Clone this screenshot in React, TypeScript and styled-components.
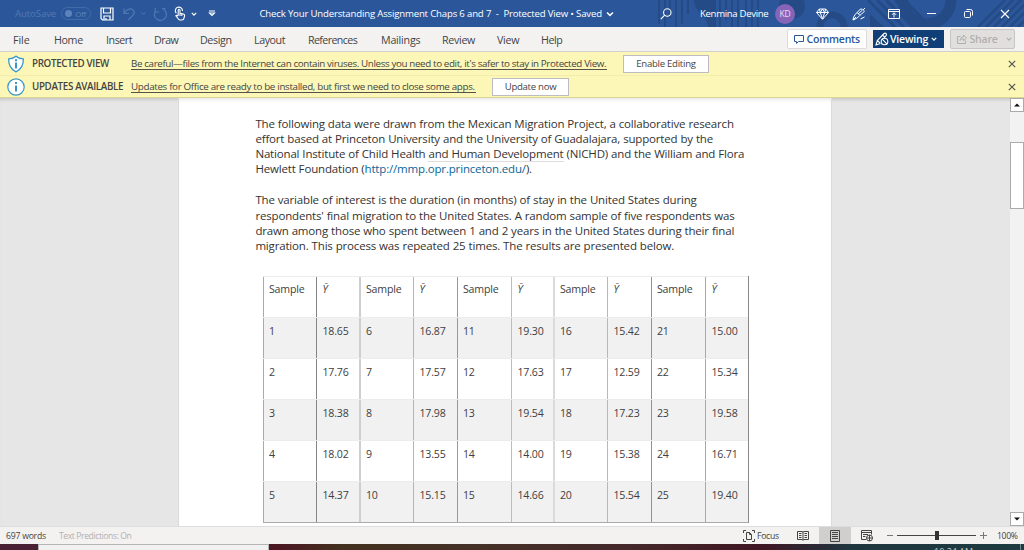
import React from 'react';
import styled, { createGlobalStyle } from 'styled-components';

const Global = createGlobalStyle`
  * { box-sizing: border-box; }
  html, body { margin: 0; padding: 0; overflow: hidden; }
  body { font-family: "Open Sans", "Noto Sans", sans-serif; color: #444; }
  svg { display: block; flex: none; }
`;

const Window = styled.div`
  width: 1024px;
  height: 550px;
  display: flex;
  flex-direction: column;
  overflow: hidden;
  background: #e6e6e6;
`;

/* Title bar */
const TitleBar = styled.header`
  position: relative;
  flex: none;
  height: 27px;
  background: #2b579a;
  color: #fff;
  overflow: hidden;
`;
const TitlePattern = styled.svg`
  position: absolute;
  right: 0;
  top: 0;
`;
const TitleRow = styled.div`
  position: relative;
  display: flex;
  align-items: center;
  height: 27px;
`;
const TitleText = styled.span<{ $w: number; $ml?: number; $ls?: number; $dim?: boolean }>`
  flex: none;
  width: ${p => p.$w}px;
  margin-left: ${p => p.$ml ?? 0}px;
  font-size: 9.6px;
  line-height: 14px;
  padding-top: 1px;
  letter-spacing: ${p => p.$ls ?? 0}px;
  white-space: pre;
  color: ${p => (p.$dim ? '#5079b3' : '#fff')};
`;
const Toggle = styled.span`
  flex: none;
  display: flex;
  align-items: center;
  justify-content: space-between;
  width: 30px;
  height: 13px;
  margin-left: 4px;
  padding: 0 4px 0 3px;
  border: 1px solid #426ca9;
  border-radius: 7px;
  font-size: 8px;
  letter-spacing: -0.3px;
  color: #5c83bb;
`;
const ToggleKnob = styled.i`
  width: 7px;
  height: 7px;
  border-radius: 50%;
  background: #5c83bb;
`;
const Glyph = styled.span<{ $w: number; $ml?: number }>`
  flex: none;
  display: flex;
  justify-content: center;
  width: ${p => p.$w}px;
  margin-left: ${p => p.$ml ?? 0}px;
`;
const Avatar = styled.span`
  flex: none;
  display: flex;
  align-items: center;
  justify-content: center;
  width: 20px;
  height: 20px;
  margin-left: 7px;
  border-radius: 50%;
  background: #8764b8;
  font-size: 8.5px;
  letter-spacing: -0.2px;
  color: #eadff5;
`;

/* Ribbon tabs */
const Ribbon = styled.nav`
  flex: none;
  display: flex;
  align-items: center;
  height: 25px;
  background: #f3f2f1;
  border-bottom: 1px solid #d2d0ce;
`;
const Tab = styled.span<{ $w: number; $ls: number }>`
  flex: none;
  width: ${p => p.$w}px;
  font-size: 10.7px;
  letter-spacing: ${p => p.$ls - 0.08}px;
  white-space: nowrap;
  padding-top: 1px;
`;
const Tabs = styled.div`
  display: flex;
  flex: 1;
  padding-left: 13px;
`;
const RibbonButton = styled.button<{ $w: number; $kind: 'plain' | 'active' | 'off' }>`
  flex: none;
  display: flex;
  align-items: center;
  gap: ${p => (p.$kind === 'active' ? 1 : 3)}px;
  width: ${p => p.$w}px;
  height: ${p => (p.$kind === 'active' ? 18 : 20)}px;
  margin-left: ${p => (p.$kind === 'plain' ? 0 : 6)}px;
  margin-right: ${p => (p.$kind === 'off' ? 9 : 0)}px;
  padding: 0 0 0 ${p => (p.$kind === 'active' ? 1 : 5.5)}px;
  border: 1px solid ${p => ({ plain: '#dddbd9', active: '#103f77', off: '#c8c6c4' })[p.$kind]};
  border-radius: ${p => (p.$kind === 'active' ? 0 : 2)}px;
  background: ${p => ({ plain: '#fff', active: '#103f77', off: '#e1dfdd' })[p.$kind]};
  color: ${p => ({ plain: '#2b579a', active: '#fff', off: '#b1afad' })[p.$kind]};
  font: 600 10.5px "Open Sans", sans-serif;
  letter-spacing: -0.2px;
`;

/* Message bars */
const Messages = styled.section`
  flex: none;
  height: 46px;
  background: #fcf7b6;
  border-bottom: 1px solid #d9d49a;
`;
const Message = styled.div`
  display: flex;
  align-items: center;
  height: 23px;
  padding: 0 7px;
  & + & { border-top: 1px solid #f2ecaf; height: 22px; }
`;
const MessageTitle = styled.strong`
  flex: none;
  width: 99px;
  margin-left: 7px;
  font-size: 9.8px;
  font-weight: 600;
  letter-spacing: -0.34px;
  white-space: nowrap;
`;
const MessageLink = styled.span<{ $w: number; $ls: number }>`
  flex: none;
  width: ${p => p.$w}px;
  height: 12px;
  line-height: 11px;
  border-bottom: 1px solid #55534a;
  font-size: 9.8px;
  letter-spacing: ${p => p.$ls}px;
  white-space: nowrap;
`;
const MessageButton = styled.button<{ $w: number; $ml: number }>`
  flex: none;
  width: ${p => p.$w}px;
  height: 18px;
  margin-left: ${p => p.$ml}px;
  padding: 0;
  border: 1px solid #bdbcc0;
  background: #fff;
  color: #444;
  font: 9.6px "Open Sans", sans-serif;
  letter-spacing: -0.28px;
`;
const Dismiss = styled.span`
  margin-left: auto;
  padding-right: 1px;
`;

/* Document area */
const Workspace = styled.main`
  flex: 1;
  min-height: 0;
  display: flex;
  background: #e6e6e6;
  box-shadow: inset 0 4px 4px -3px rgba(0, 0, 0, 0.18);
`;
const Page = styled.article`
  width: 654px;
  height: 100%;
  margin-left: 178px;
  padding: 17.5px 0 0 76.4px;
  background: #fff;
  border: solid #dadada;
  border-width: 0 1px;
  box-shadow: inset 0 4px 4px -3px rgba(0, 0, 0, 0.13);
`;
const Paragraph = styled.p`
  margin: 0 0 16px;
  font-size: 11.5px;
  line-height: 15.2px;
  letter-spacing: -0.17px;
  word-spacing: 0.2px;
  color: #333;
`;
const Line = styled.span`
  display: block;
  white-space: nowrap;
`;
const Hyperlink = styled.a`color: #0b6597;`;
const Suggested = styled.span`box-shadow: 0 1px 0 #dedede;`;
const Table = styled.div`
  width: 486px;
  margin: 22.9px 0 0 7.6px;
  border-right: 1px solid #888;
  border-bottom: 1px solid #aaa;
`;
const TableRow = styled.div<{ $shade: boolean }>`
  display: grid;
  grid-template-columns: 53px 43px 54px 44px 54px 42px 54px 44px 54px 43px;
  height: 41px;
  background: ${p => (p.$shade ? '#f1f1f1' : '#fff')};
  border-top: 1px solid #ececec;
`;
const Cell = styled.div<{ $line: string; $thick: boolean; $value: boolean; $symbol: boolean; $head: boolean }>`
  border-left: ${p => (p.$thick ? 2 : 1)}px solid ${p => p.$line};
  padding: ${p => (p.$head ? 5 : 6)}px 0 0 ${p => (p.$value && !p.$thick ? 5.5 : 5)}px;
  font-size: ${p => (p.$symbol ? 10.4 : 10.6)}px;
  line-height: 15.500px;
  letter-spacing: -0.17px;
  font-style: ${p => (p.$symbol ? 'italic' : 'normal')};
  color: #404040;
  white-space: nowrap;
`;

/* Vertical scrollbar */
const Scrollbar = styled.aside`
  display: flex;
  flex-direction: column;
  width: 14px;
  height: 100%;
  margin-left: auto;
  background: #f2f2f2;
`;
const ScrollArrow = styled.div`
  display: flex;
  align-items: center;
  justify-content: center;
  height: 14px;
  border: 1px solid #aaa;
  background: #fff;
`;
const ScrollThumb = styled.div`
  height: 67px;
  margin: 30px 0 auto;
  border: 1px solid #ababab;
  background: #fff;
`;

/* Status bar */
const StatusBar = styled.footer`
  flex: none;
  display: flex;
  align-items: center;
  height: 18px;
  background: #f3f2f1;
  border-top: 1px solid #dedddc;
`;
const StatusText = styled.span<{ $ml: number; $w: number; $dim?: boolean; $ls: number }>`
  flex: none;
  width: ${p => p.$w}px;
  margin-left: ${p => p.$ml}px;
  font-size: 8.7px;
  line-height: 16px;
  letter-spacing: ${p => p.$ls}px;
  color: ${p => (p.$dim ? '#b3b1af' : '#444')};
  white-space: nowrap;
`;
const ViewButton = styled.span<{ $on?: boolean }>`
  flex: none;
  display: flex;
  align-items: center;
  justify-content: center;
  width: 32px;
  height: 17px;
  background: ${p => (p.$on ? '#d0cfce' : 'transparent')};
`;

/* Sliver of the desktop under the window */
const Desktop = styled.div`
  flex: none;
  display: flex;
  height: 6px;
  overflow: hidden;
  background: linear-gradient(90deg, #4a2034 0, #4a2034 38px, #4b1822 280px, #43301f 340px, #453128 480px, #44272a 640px, #3f1622 760px, #2a2834 815px, #20363e 850px, #1d3b41 1024px);
`;
const SearchBox = styled.div`
  width: 231px;
  height: 8px;
  margin-left: 38px;
  border: 1px solid #b5b5b5;
  background: #f1f1f1;
`;
const Clock = styled.span`
  margin: 3px 0 0 665px;
  font-size: 9px;
  line-height: 10px;
  white-space: nowrap;
  color: #c5ced0;
`;
const DesktopEdge = styled.i`
  margin-left: auto;
  margin-right: 3px;
  width: 1px;
  background: #75878b;
`;

const Chevron = ({ color = '#fff', size = 6 }: { color?: string; size?: number }) => (
  <svg width={size} height={size} viewBox="0 0 6 6" fill="none" stroke={color} strokeWidth="1.2"><path d="M.8 1.9 3 4.1 5.2 1.9" /></svg>
);
const Close = ({ s, color, w = 1 }: { s: number; color: string; w?: number }) => (
  <svg width={s} height={s} viewBox="0 0 10 10" stroke={color} strokeWidth={w}><path d="M1 1 9 9M9 1 1 9" /></svg>
);

const symbol = 'Ȳ';
const lines: [string, boolean][] = [
  ['#aaa', false], ['#858585', false], ['#cecece', true], ['#b5b5b5', false], ['#9a9a9a', false],
  ['#bcbcbc', false], ['#dadada', true], ['#b8b8b8', false], ['#929292', false], ['#a8a8a8', false],
];
const rows: string[][] = [
  ['Sample', symbol, 'Sample', symbol, 'Sample', symbol, 'Sample', symbol, 'Sample', symbol],
  ['1', '18.65', '6', '16.87', '11', '19.30', '16', '15.42', '21', '15.00'],
  ['2', '17.76', '7', '17.57', '12', '17.63', '17', '12.59', '22', '15.34'],
  ['3', '18.38', '8', '17.98', '13', '19.54', '18', '17.23', '23', '19.58'],
  ['4', '18.02', '9', '13.55', '14', '14.00', '19', '15.38', '24', '16.71'],
  ['5', '14.37', '10', '15.15', '15', '14.66', '20', '15.54', '25', '19.40'],
];
const tabs: [string, number, number][] = [
  ['File', 41, 0], ['Home', 52, -0.27], ['Insert', 48, -0.37], ['Draw', 46, -0.4], ['Design', 54, -0.3], ['Layout', 54, -0.35],
  ['References', 73, -0.54], ['Mailings', 61, -0.14], ['Review', 55, -0.23], ['View', 44, -0.22], ['Help', 30, -0.35],
];

const Pattern = () => (
  <TitlePattern width="370" height="27" viewBox="654 0 370 27" fill="none" stroke="#254b86">
    <path d="M659 0v24M665 0v27M670 0v18M676 0v27M682 0v24M688 0v14" strokeWidth="2" />
    <path d="M694 0h22v27h-8c0-12-14-14-14-27z" fill="#254b86" stroke="none" />
    <path d="M720 0v27M726 0v20M732 0v27M738 0v27M746 0v27M752 0v27M758 0v27" strokeWidth="2" />
    <circle cx="792" cy="6" r="13" fill="#254b86" stroke="none" />
    <circle cx="832" cy="27" r="12" strokeWidth="7" />
    <path d="M868 0 895 27M877 0 904 27M886 0 913 27M895 0 922 27M904 0 931 27" strokeWidth="3" />
    <path d="M870 14v13h14z" fill="#254b86" stroke="none" />
    <circle cx="927" cy="0" r="24" strokeWidth="11" />
    <path d="M978 27 1005 0M986 27 1013 0M994 27 1021 0M1002 27 1024 5M1010 27 1024 13M1018 27 1024 21" strokeWidth="2.5" />
  </TitlePattern>
);

export default function App() {
  return (
    <Window>
      <Global />
      <TitleBar>
        <Pattern />
        <TitleRow>
          <TitleText $w={42} $ml={15} $ls={-0.1} $dim>AutoSave</TitleText>
          <Toggle><ToggleKnob />Off</Toggle>
          <Glyph $w={14} $ml={9}>
            <svg width="14" height="14" viewBox="0 0 14 14" fill="none" stroke="#fff" strokeWidth="1.2"><path d="M1 1h12v12H2.5L1 11.5zM3.5 1v5h7V1M4 13V9h6v4M6 11v2" /></svg>
          </Glyph>
          <Glyph $w={12} $ml={9}>
            <svg width="13" height="14" viewBox="0 0 13 14" fill="none" stroke="#5079b3" strokeWidth="1.2"><path d="M1 1.5v5h5M1.2 6.2C4 1.5 8 1 10.300 3.200c3 3-1 5.500-5 9.600" /></svg>
          </Glyph>
          <Glyph $w={6} $ml={5}><Chevron color="#5079b3" size={5} /></Glyph>
          <Glyph $w={14} $ml={7}>
            <svg width="14" height="14" viewBox="0 0 14 14" fill="none" stroke="#5079b3" strokeWidth="1.2"><path d="M2.200 1v4h4M10.500 2.300A6 6 0 1 1 2.300 4.300M9 1.500h3.500" /></svg>
          </Glyph>
          <Glyph $w={12} $ml={7}>
            <svg width="12" height="15" viewBox="0 0 12 15" fill="none" stroke="#fff" strokeWidth="1.1"><path d="M2.300 7.200A3.600 3.600 0 1 1 8.500 5M4.200 9.500V4.200c0-1.300 1.800-1.300 1.800 0v3l3.400.8c1 .3 1.300.8 1.200 1.700L10 12.200c-.3 1.200-1 1.800-2 1.800H6.200c-.8 0-1.300-.3-1.800-1L1.800 9.800c.6-.8 1.500-.5 2.400.4M7.800 8v2M6 7v3" /></svg>
          </Glyph>
          <Glyph $w={6} $ml={5}><Chevron size={6} /></Glyph>
          <Glyph $w={10} $ml={10}>
            <svg width="8" height="7" viewBox="0 0 8 7" fill="none" stroke="#fff" strokeWidth="1.1"><path d="M1 1h6M1.500 3 4 5.500 6.500 3z" /></svg>
          </Glyph>
          <TitleText $ml={42.500} $w={344.500} $ls={-0.17}>Check Your Understanding Assignment Chaps 6 and 7  -  Protected View • Saved</TitleText>
          <Glyph $w={7} $ml={2}><Chevron size={8} /></Glyph>
          <Glyph $w={12} $ml={47}>
            <svg width="12" height="12" viewBox="0 0 12 12" fill="none" stroke="#fff" strokeWidth="1.1"><circle cx="7.300" cy="4.500" r="3.700" /><path d="M4.700 7.200 .8 11.200" /></svg>
          </Glyph>
          <TitleText $ml={28} $w={68} $ls={-0.33}>Kenmina Devine</TitleText>
          <Avatar>KD</Avatar>
          <Glyph $w={13} $ml={21}>
            <svg width="13" height="12" viewBox="0 0 13 12" fill="none" stroke="#fff" strokeWidth="1"><path d="M3.300 1h6.400l2.800 3.500L6.500 11.300.5 4.500zM.5 4.500h12M4.300 4.500l2.200 6.500 2.200-6.500L6.500 1zM3.300 1l1 3.500M9.700 1l-1 3.500" /></svg>
          </Glyph>
          <Glyph $w={14} $ml={23}>
            <svg width="14" height="14" viewBox="0 0 14 14" fill="none" stroke="#fff" strokeWidth="1"><path d="M1 13c.3-3 1.500-5 4-7.500l3 2.800C6 10.500 4 12 1 13zM5 5.500 8.500 2l2 .2M8 8.300l4.500-4-1-1M6 7l4.500-4M11 3l2-2M1 13l3-3M8.500 12l4-2" /></svg>
          </Glyph>
          <Glyph $w={12} $ml={22}>
            <svg width="12" height="10" viewBox="0 0 12 10" fill="none" stroke="#fff" strokeWidth="1"><path d="M.5.5h11v9H.5zM.5 2.500h11M6 8.500V4M4 5.800l2-2 2 2" /></svg>
          </Glyph>
          <Glyph $w={9} $ml={27}>
            <svg width="9" height="3" viewBox="0 0 9 3" stroke="#fff"><path d="M0 1.500h9" /></svg>
          </Glyph>
          <Glyph $w={9} $ml={28}>
            <svg width="9" height="9" viewBox="0 0 9 9" fill="none" stroke="#fff"><rect x=".5" y="2.500" width="6" height="6" rx="1" /><path d="M2.500.5h4a2 2 0 0 1 2 2v4" /></svg>
          </Glyph>
          <Glyph $w={10} $ml={27}><Close s={10} color="#fff" w={1.1} /></Glyph>
        </TitleRow>
      </TitleBar>

      <Ribbon>
        <Tabs>{tabs.map(([t, w, ls]) => <Tab key={t} $w={w} $ls={ls}>{t}</Tab>)}</Tabs>
        <RibbonButton $w={80} $kind="plain">
          <svg width="10" height="9" viewBox="0 0 10 9" fill="none" stroke="#2b579a"><path d="M.5.5h9v6H4.500l-2 2v-2h-2z" /></svg>
          Comments
        </RibbonButton>
        <RibbonButton $w={71} $kind="active">
          <svg width="14" height="14" viewBox="0 0 14 14" fill="none" stroke="#fff" strokeWidth="1.1"><path d="M5.500 11.500 1 13l1.300-4.500L9 1.500c1.500-1 3 .3 2.300 1.900L9 6M2.300 8.500 5 11M7.500 3l2 2" /><circle cx="9.500" cy="9.500" r="3.300" /><path d="m7.200 7.200 4.600 4.600" /></svg>
          Viewing <Glyph $w={6} $ml={2}><Chevron size={6} /></Glyph>
        </RibbonButton>
        <RibbonButton $w={65} $kind="off">
          <svg width="10" height="10" viewBox="0 0 10 10" fill="none" stroke="#b1afad"><path d="M3.500 2.500h-3v7h8v-3M3 6.500c0-2.500 1.500-3.500 3.500-3.500V1L9.500 4l-3 2.700V5C5 5 4 5.300 3 6.500z" /></svg>
          Share <Glyph $w={6} $ml={5}><Chevron color="#b1afad" size={6} /></Glyph>
        </RibbonButton>
      </Ribbon>

      <Messages>
        <Message>
          <svg width="18" height="18" viewBox="0 0 18 18" fill="#fff" stroke="#3a96c8" strokeWidth="1.3"><path d="M9 1.200C11 3 13.500 3.800 16.300 3.800c.3 6-1.300 10.200-7.300 13C3 14 1.400 9.800 1.700 3.800 4.500 3.800 7 3 9 1.200z" /><path d="M9 7.500v6M9 4.300v2" strokeWidth="2" /></svg>
          <MessageTitle>PROTECTED VIEW</MessageTitle>
          <MessageLink $w={476} $ls={-0.37}>Be careful—files from the Internet can contain viruses. Unless you need to edit, it's safer to stay in Protected View.</MessageLink>
          <MessageButton $w={86} $ml={16}>Enable Editing</MessageButton>
          <Dismiss><Close s={8} color="#555" w={1.5} /></Dismiss>
        </Message>
        <Message>
          <svg width="18" height="18" viewBox="0 0 18 18" fill="#fff" stroke="#3a96c8" strokeWidth="1.2"><circle cx="9" cy="9" r="8.200" /><path d="M9 7.500v6M9 4v2" strokeWidth="2" /></svg>
          <MessageTitle>UPDATES AVAILABLE</MessageTitle>
          <MessageLink $w={345} $ls={-0.33}>Updates for Office are ready to be installed, but first we need to close some apps.</MessageLink>
          <MessageButton $w={77} $ml={16}>Update now</MessageButton>
          <Dismiss><Close s={8} color="#555" w={1.5} /></Dismiss>
        </Message>
      </Messages>

      <Workspace>
        <Page>
          <Paragraph>
            <Line>The following data were drawn from the Mexican Migration Project, a collaborative research</Line>
            <Line>effort based at Princeton University and the University of Guadalajara, supported by the</Line>
            <Line>National Institute of Child Health <Suggested>and Human Development</Suggested> (NICHD) and the William and Flora</Line>
            <Line>Hewlett Foundation (<Hyperlink>http://mmp.opr.princeton.edu/</Hyperlink>).</Line>
          </Paragraph>
          <Paragraph>
            <Line>The variable of interest is the duration (in months) of stay in the United States during</Line>
            <Line>respondents' final migration to the United States. A random sample of five respondents was</Line>
            <Line>drawn among those who spent between 1 and 2 years in the United States during their final</Line>
            <Line>migration. This process was repeated 25 times. The results are presented below.</Line>
          </Paragraph>
          <Table>
            {rows.map((r, i) => (
              <TableRow key={i} $shade={i % 2 === 1}>
                {r.map((c, j) => <Cell key={j} $line={lines[j][0]} $thick={lines[j][1]} $value={j % 2 === 1} $symbol={c === symbol} $head={i === 0}>{c}</Cell>)}
              </TableRow>
            ))}
          </Table>
        </Page>
        <Scrollbar>
          <ScrollArrow><svg width="6" height="4" viewBox="0 0 6 4"><path d="M0 3.500 3 .5 6 3.500z" fill="#111" /></svg></ScrollArrow>
          <ScrollThumb />
          <ScrollArrow><svg width="6" height="4" viewBox="0 0 6 4"><path d="M0 .5 3 3.500 6 .5z" fill="#111" /></svg></ScrollArrow>
        </Scrollbar>
      </Workspace>

      <StatusBar>
        <StatusText $ml={6} $w={40} $ls={-0.25}>697 words</StatusText>
        <StatusText $ml={13} $w={73} $ls={-0.45} $dim>Text Predictions: On</StatusText>
        <Glyph $w={12} $ml={611}>
          <svg width="12" height="12" viewBox="0 0 12 12" fill="none" stroke="#444"><path d="M3 .5H.5V3M9 .5h2.500V3M3 11.500H.5V9M9 11.500h2.500V9M3.500 2.500h3L8.500 4.500v5h-5zM6.500 2.500v2h2" /></svg>
        </Glyph>
        <StatusText $ml={2} $w={29.5} $ls={-0.3}>Focus</StatusText>
        <ViewButton>
          <svg width="12" height="11" viewBox="0 0 12 11" fill="none" stroke="#444"><path d="M.5 1.500H5l1 .6 1-.6h4.500v8H7l-1 .8-1-.8H.5zM6 2v8M2 3.500h2.500M2 5.500h2.500M2 7.500h2.500M7.500 3.500H10M7.500 5.500H10M7.500 7.500H10" /></svg>
        </ViewButton>
        <ViewButton $on>
          <svg width="10" height="12" viewBox="0 0 10 12" fill="none" stroke="#444"><path d="M.5.5h9v11h-9zM2 2.500h6M2 4.500h6M2 6.500h6M2 8.500h6" /></svg>
        </ViewButton>
        <ViewButton>
          <svg width="12" height="12" viewBox="0 0 12 12" fill="none" stroke="#444"><path d="M5 9.500H.5v-9h10v4M.5 2.500h10M2 4.500h5M2 6.500h2.500" /><circle cx="8.500" cy="8" r="3" /><path d="M5.500 8h6M8.500 5v6" /></svg>
        </ViewButton>
        <Glyph $w={6} $ml={4.5}><svg width="6" height="3" stroke="#777"><path d="M0 1.500h6" /></svg></Glyph>
        <Glyph $w={79} $ml={4}>
          <svg width="79" height="9" viewBox="0 0 79 9"><path d="M0 4.500h79" stroke="#444" /><path d="M38 0h4v9h-4z" fill="#333" /></svg>
        </Glyph>
        <Glyph $w={7} $ml={4}><svg width="7" height="7" stroke="#777"><path d="M0 3.500h7M3.500 0v7" /></svg></Glyph>
        <StatusText $ml={10} $w={24} $ls={-0.4}>100%</StatusText>
      </StatusBar>
      <Desktop>
        <SearchBox />
        <Clock>10:24 AM</Clock>
        <DesktopEdge />
      </Desktop>
    </Window>
  );
}
